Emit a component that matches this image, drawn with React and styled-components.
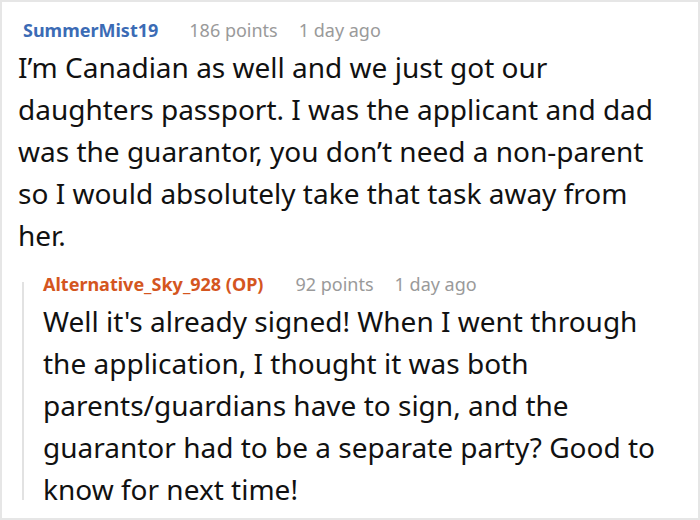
import React from 'react'
import styled, { createGlobalStyle } from 'styled-components'

const GlobalStyle = createGlobalStyle`
    html, body {
        margin: 0;
        padding: 0;
        background: #ffffff;
    }
    body {
        font-family: "Noto Sans", "Open Sans", sans-serif;
    }
`

const comment = {
    author: 'SummerMist19',
    points: '186 points',
    time: '1 day ago',
    body: 'I’m Canadian as well and we just got our daughters passport. I was the applicant and dad was the guarantor, you don’t need a non-parent so I would absolutely take that task away from her.',
    reply: {
        author: 'Alternative_Sky_928 (OP)',
        points: '92 points',
        time: '1 day ago',
        body: "Well it's already signed! When I went through the application, I thought it was both parents/guardians have to sign, and the guarantor had to be a separate party? Good to know for next time!",
    },
}

function App() {
    const { reply } = comment
    return (
        <>
            <GlobalStyle />
            <Frame>
                <Comment>
                    <Meta>
                        <Author>{comment.author}</Author>
                        <Info>{comment.points}</Info>
                        <Info>{comment.time}</Info>
                    </Meta>
                    <Body>{comment.body}</Body>
                </Comment>
                <Reply>
                    <Meta>
                        <Author $op>{reply.author}</Author>
                        <Info>{reply.points}</Info>
                        <Info>{reply.time}</Info>
                    </Meta>
                    <Body>{reply.body}</Body>
                </Reply>
            </Frame>
        </>
    )
}

export default App

const Frame = styled.div`
    width: 700px;
    height: 520px;
    box-sizing: border-box;
    border: 2px solid #e6e6e6;
    padding: 16px 0 0 16px;
    overflow: hidden;
`
const Comment = styled.div`
    width: 650px;
`
const Meta = styled.div`
    display: flex;
    align-items: baseline;
    gap: 0 21px;
    padding-left: 5px;
    font-size: 18px;
    line-height: 24px;
`
const Author = styled.span`
    font-weight: bold;
    color: ${p => (p.$op ? '#d4561f' : '#3b6bb5')};
    margin-right: ${p => (p.$op ? '11px' : '10px')};
`
const Info = styled.span`
    color: #9a9a9a;
`
const Body = styled.p`
    margin: 4px 0 0;
    font-size: 28px;
    line-height: 42px;
    color: #111111;
`
const Reply = styled.div`
    position: relative;
    width: 626px;
    margin: 16px 0 0 4px;
    padding-left: 21px;

    ${Meta} {
        padding-left: 0;
    }
    ${Body} {
        margin-top: 4px;
    }

    &::before {
        content: '';
        position: absolute;
        left: 0;
        top: 10px;
        bottom: 10px;
        width: 2px;
        background: #e2e2e2;
    }
`
